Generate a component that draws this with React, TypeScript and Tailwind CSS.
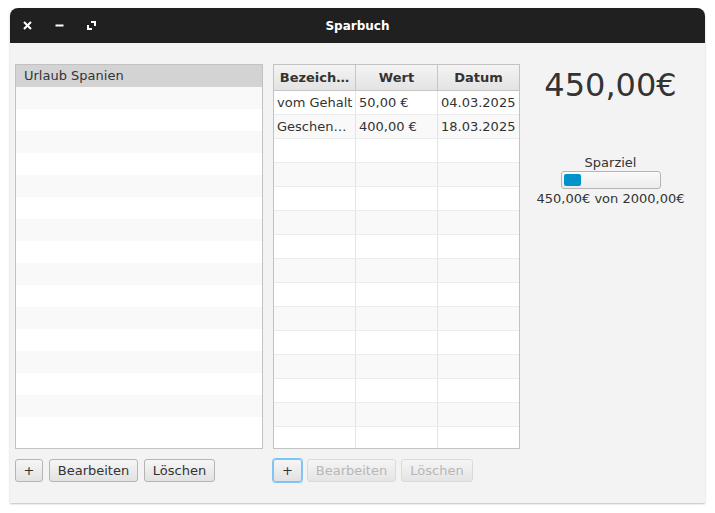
import React from 'react';

const font = { fontFamily: '"DejaVu Sans", Verdana, sans-serif' };

const rows = [
  { name: 'vom Gehalt', value: '50,00 €', date: '04.03.2025' },
  { name: 'Geschen…', value: '400,00 €', date: '18.03.2025' },
];

const Btn = ({
  children,
  disabled,
  focused,
  className = '',
}: {
  children: React.ReactNode;
  disabled?: boolean;
  focused?: boolean;
  className?: string;
}) => (
  <button
    className={`h-[23px] rounded-[3px] border bg-gradient-to-b from-[#f6f6f6] to-[#e2e2e2] text-[13px] leading-none ${
      disabled ? 'text-[#a8a8a8] border-[#d4d4d4] opacity-80' : 'text-[#333] border-[#b4b4b4]'
    } ${focused ? 'border-[#0093ff] ring-1 ring-[#7fc4f5]' : ''} ${className}`}
  >
    {children}
  </button>
);

const App = () => {
  return (
    <div className="w-[715px] h-[513px] bg-white pt-[8px] pl-[10px]" style={font}>
      <div className="w-[695px] h-[495px] flex flex-col shadow-[0_1px_2px_rgba(0,0,0,0.25)] rounded-t-[8px]">
        {/* Title bar */}
        <div className="h-[35px] bg-[#202020] rounded-t-[8px] flex items-center relative">
          <div className="flex items-center gap-[19px] pl-[11px] text-white">
            <svg width="13" height="13" viewBox="0 0 13 13">
              <path d="M3 3 L10 10 M10 3 L3 10" stroke="white" strokeWidth="2" />
            </svg>
            <svg width="13" height="13" viewBox="0 0 13 13">
              <path d="M2.5 6.5 H10.5" stroke="white" strokeWidth="2" />
            </svg>
            <svg width="13" height="13" viewBox="0 0 13 13">
              <path d="M6 3 H10 V7 M3 6 V10 H7" stroke="white" strokeWidth="2" fill="none" />
            </svg>
          </div>
          <div className="absolute inset-0 flex items-center justify-center text-white text-[12px] font-bold">
            Sparbuch
          </div>
        </div>

        {/* Body */}
        <div className="flex-1 bg-[#f3f3f3] flex pt-[21px] pl-[5px]">
          {/* Left: list */}
          <div className="flex flex-col w-[248px]">
            <div className="h-[385px] border border-[#c2c2c2] bg-white flex flex-col overflow-hidden">
              <div className="h-[22px] shrink-0 bg-[#d3d3d3] text-[13px] text-[#333] pl-[8px] flex items-center">
                Urlaub Spanien
              </div>
              {Array.from({ length: 16 }).map((_, i) => (
                <div key={i} className={`h-[22px] shrink-0 ${i % 2 === 0 ? 'bg-[#f9f9f9]' : 'bg-white'}`} />
              ))}
            </div>
            <div className="flex gap-[6px] mt-[10px]">
              <Btn className="w-[28px]">+</Btn>
              <Btn className="w-[89px]">Bearbeiten</Btn>
              <Btn className="w-[71px]">Löschen</Btn>
            </div>
          </div>

          {/* Middle: table */}
          <div className="flex flex-col w-[247px] ml-[10px]">
            <div className="h-[385px] border border-[#c2c2c2] bg-white flex flex-col overflow-hidden">
              <div className="h-[26px] shrink-0 flex bg-gradient-to-b from-[#f4f4f4] to-[#e3e3e3] border-b border-[#c6c6c6] text-[13px] font-bold text-[#333]">
                <div className="w-[82px] border-r border-[#c6c6c6] flex items-center justify-center">Bezeich…</div>
                <div className="w-[82px] border-r border-[#c6c6c6] flex items-center justify-center">Wert</div>
                <div className="flex-1 flex items-center justify-center">Datum</div>
              </div>
              {Array.from({ length: 15 }).map((_, i) => {
                const r = rows[i];
                return (
                  <div
                    key={i}
                    className={`h-[24px] shrink-0 flex border-b border-[#ececec] text-[13px] text-[#333] ${
                      i % 2 === 1 ? 'bg-[#f9f9f9]' : 'bg-white'
                    }`}
                  >
                    <div className="w-[82px] border-r border-[#e4e4e4] pl-[3px] flex items-center whitespace-nowrap overflow-hidden">
                      {r?.name}
                    </div>
                    <div className="w-[82px] border-r border-[#e4e4e4] pl-[3px] flex items-center whitespace-nowrap">
                      {r?.value}
                    </div>
                    <div className="flex-1 pl-[3px] flex items-center whitespace-nowrap">{r?.date}</div>
                  </div>
                );
              })}
            </div>
            <div className="flex gap-[5px] mt-[10px]">
              <Btn focused className="w-[29px]">+</Btn>
              <Btn disabled className="w-[89px]">Bearbeiten</Btn>
              <Btn disabled className="w-[72px]">Löschen</Btn>
            </div>
          </div>

          {/* Right: summary */}
          <div className="flex-1 flex flex-col items-center pr-[4px]">
            <div className="text-[32px] leading-none text-[#333] mt-[5px]">450,00€</div>
            <div className="text-[13px] text-[#333] mt-[55px] leading-none">Sparziel</div>
            <div className="w-[100px] h-[18px] mt-[2px] rounded-[3px] border border-[#b5b5b5] bg-gradient-to-b from-[#fafafa] to-[#ececec] p-[2px]">
              <div className="w-[17px] h-full rounded-[2px] bg-[#0093c9]" />
            </div>
            <div className="text-[13px] text-[#333] mt-[3px] leading-none">450,00€ von 2000,00€</div>
          </div>
        </div>
      </div>
    </div>
  );
};

export default App;
